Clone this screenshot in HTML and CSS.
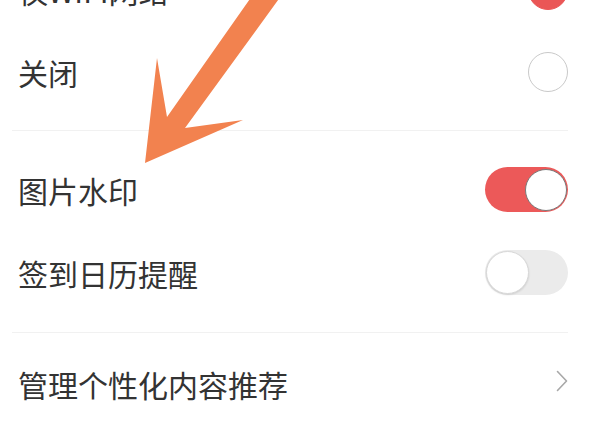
FILE: index.html
```html
<!DOCTYPE html>
<html lang="zh">
<head>
<meta charset="utf-8">
<link rel="stylesheet" href="styles.css">
</head>
<body>
<div class="page">
  <section class="group group-first">
    <div class="row">
      <span class="label">仅WIFI网络</span>
      <span class="radio radio-on"></span>
    </div>
    <div class="row">
      <span class="label">关闭</span>
      <span class="radio"></span>
    </div>
  </section>
  <section class="group">
    <div class="row row-tall">
      <span class="label">图片水印</span>
      <span class="switch switch-on"><span class="knob"></span></span>
    </div>
    <div class="row row-tall">
      <span class="label">签到日历提醒</span>
      <span class="switch"><span class="knob"></span></span>
    </div>
  </section>
  <section class="group group-last">
    <div class="row">
      <span class="label">管理个性化内容推荐</span>
      <svg class="chevron" width="12" height="22" viewBox="0 0 12 22"><path d="M1.5 1.5 L10.5 11 L1.5 20.5" fill="none" stroke="#a8a8a8" stroke-width="1.6" stroke-linecap="round" stroke-linejoin="round"/></svg>
    </div>
  </section>
  <svg class="arrow" width="589" height="430" viewBox="0 0 589 430">
    <polygon points="252,-4 281,-4 185,128 243,120 145,163 157,58 167,117" fill="#f2824f"/>
  </svg>
</div>
</body>
</html>
```
FILE: styles.css
```css
html, body {
  margin: 0;
  padding: 0;
  background: #ffffff;
  overflow: hidden;
}
.page {
  position: relative;
  width: 589px;
  height: 430px;
  overflow: hidden;
  font-family: "Noto Sans CJK SC", "Noto Sans", sans-serif;
  color: #333333;
}
.group {
  margin: 0 21px 0 12px;
  padding: 17px 0 18px;
  border-bottom: 1px solid #f1f1f1;
}
.group-first {
  margin-top: -68px;
  padding-bottom: 17px;
}
.group-last {
  padding-top: 10px;
  border-bottom: none;
}
.row {
  height: 82px;
  display: flex;
  align-items: center;
  justify-content: space-between;
  padding-left: 6px;
}
.row-tall {
  height: 83px;
}
.label {
  font-size: 30px;
  line-height: 40px;
  letter-spacing: 0;
}
.radio {
  width: 38px;
  height: 38px;
  border-radius: 50%;
  border: 1.5px solid #c9c9c9;
  box-sizing: content-box;
}
.radio-on {
  background: #ea5656;
  border-color: #ea5656;
}
.switch {
  width: 83px;
  height: 45px;
  border-radius: 23px;
  background: #ebebeb;
  display: flex;
  align-items: center;
  justify-content: flex-start;
  box-sizing: border-box;
  padding: 0 1px;
}
.switch-on {
  background: #ec5959;
  justify-content: flex-end;
}
.knob {
  width: 41px;
  height: 41px;
  border-radius: 50%;
  background: #ffffff;
  border: 1px solid #d8d8d8;
  box-shadow: 0 1px 2px rgba(0,0,0,0.12);
}
.switch-on .knob {
  border: 1.5px solid #7a7a7a;
  box-shadow: none;
  width: 40px;
  height: 40px;
}
.chevron {
  display: block;
  margin-top: -6px;
}
.arrow {
  position: absolute;
  left: 0;
  top: 0;
  pointer-events: none;
}
```
